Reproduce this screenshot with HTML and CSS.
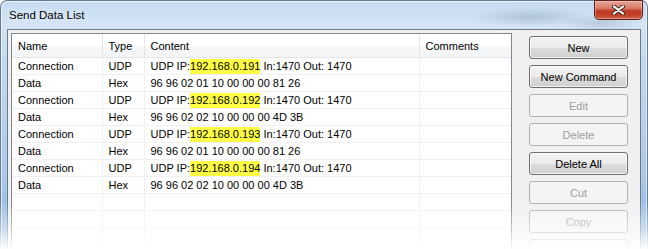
FILE: index.html
```html
<!DOCTYPE html>
<html>
<head>
  <title>Send Data List</title>
  <link rel="stylesheet" href="styles.css">
</head>
<body>
  <div class="window">
    <div class="titlebar">
      <span class="title">Send Data List</span>
      <button class="close" title="Close">
        <svg width="13" height="10" viewBox="0 0 13 10">
          <path d="M2 1.5 L11 8.5 M11 1.5 L2 8.5" stroke="#3a2a2a" stroke-width="4" stroke-linecap="round"/>
          <path d="M2 1.5 L11 8.5 M11 1.5 L2 8.5" stroke="#fff" stroke-width="2.2" stroke-linecap="round"/>
        </svg>
      </button>
    </div>

    <div class="client">
      <div class="list">
        <table>
          <colgroup>
            <col class="col-name">
            <col class="col-type">
            <col class="col-content">
            <col class="col-comments">
          </colgroup>
          <thead>
            <tr>
              <th>Name</th>
              <th>Type</th>
              <th>Content</th>
              <th>Comments</th>
            </tr>
          </thead>
          <tbody>
            <tr>
              <td>Connection</td>
              <td>UDP</td>
              <td>UDP IP:<span class="hl">192.168.0.191</span> In:1470 Out: 1470</td>
              <td></td>
            </tr>
            <tr>
              <td>Data</td>
              <td>Hex</td>
              <td>96 96 02 01 10 00 00 00 81 26</td>
              <td></td>
            </tr>
            <tr>
              <td>Connection</td>
              <td>UDP</td>
              <td>UDP IP:<span class="hl">192.168.0.192</span> In:1470 Out: 1470</td>
              <td></td>
            </tr>
            <tr>
              <td>Data</td>
              <td>Hex</td>
              <td>96 96 02 02 10 00 00 00 4D 3B</td>
              <td></td>
            </tr>
            <tr>
              <td>Connection</td>
              <td>UDP</td>
              <td>UDP IP:<span class="hl">192.168.0.193</span> In:1470 Out: 1470</td>
              <td></td>
            </tr>
            <tr>
              <td>Data</td>
              <td>Hex</td>
              <td>96 96 02 01 10 00 00 00 81 26</td>
              <td></td>
            </tr>
            <tr>
              <td>Connection</td>
              <td>UDP</td>
              <td>UDP IP:<span class="hl">192.168.0.194</span> In:1470 Out: 1470</td>
              <td></td>
            </tr>
            <tr>
              <td>Data</td>
              <td>Hex</td>
              <td>96 96 02 02 10 00 00 00 4D 3B</td>
              <td></td>
            </tr>
            <tr><td></td><td></td><td></td><td></td></tr>
            <tr><td></td><td></td><td></td><td></td></tr>
            <tr><td></td><td></td><td></td><td></td></tr>
            <tr><td></td><td></td><td></td><td></td></tr>
          </tbody>
        </table>
      </div>

      <div class="buttons">
        <button class="button">New</button>
        <button class="button">New Command</button>
        <button class="button" disabled>Edit</button>
        <button class="button" disabled>Delete</button>
        <button class="button">Delete All</button>
        <button class="button" disabled>Cut</button>
        <button class="button" disabled>Copy</button>
        <button class="button" disabled></button>
      </div>
    </div>
  </div>

  <div class="fade"></div>
</body>
</html>
```

FILE: styles.css
```css
/* page */
body {
  margin: 0;
  width: 648px;
  height: 249px;
  overflow: hidden;
  background-color: #fff;
  font-family: "Liberation Sans", Arial, sans-serif;
  font-size: 11px;
  position: relative;
}

/* window frame (aero glass) */
.window {
  position: relative;
  width: 648px;
  height: 270px;
  box-sizing: border-box;
  border: 1px solid #6a7b8e;
  border-bottom: none;
  border-radius: 7px 7px 0 0;
  padding: 0 6px;
  background:
    radial-gradient(ellipse 60px 10px at 530px 16px, rgba(120, 140, 160, 0.35), rgba(120, 140, 160, 0)),
    radial-gradient(ellipse 40px 8px at 600px 22px, rgba(120, 140, 160, 0.3), rgba(120, 140, 160, 0)),
    linear-gradient(to bottom, #c6dcf1 0, #d3e5f6 24px, #c2d9f1 60px, #a9c8ea 180px, #7eaee0 260px);
  box-shadow: inset 1px 1px 0 rgba(255, 255, 255, 0.6), inset -1px 0 0 rgba(255, 255, 255, 0.6);
}

.titlebar {
  height: 28px;
  display: flex;
  align-items: center;
}

.title {
  font-family: "Liberation Sans", Arial, sans-serif;
  font-size: 11.5px;
  color: #000;
  margin-left: 2px;
  text-shadow: 0 0 6px rgba(255, 255, 255, 0.9);
}

/* close button sits over the frame */
.close {
  position: absolute;
  top: -1px;
  right: 4px;
  width: 49px;
  height: 20px;
  padding: 0;
  border: 1px solid #5d2118;
  border-radius: 0 0 5px 5px;
  background: linear-gradient(to bottom, #e6a496 0, #d87c69 40%, #c13a24 55%, #c2412a 80%, #d4664e 100%);
  box-shadow: inset 0 0 0 1px rgba(255, 255, 255, 0.3);
  display: flex;
  align-items: center;
  justify-content: center;
}

/* client area */
.client {
  height: 240px;
  border: 1px solid #6d7a88;
  background-color: #f0f0f0;
  display: flex;
  align-items: flex-start;
  padding: 3px 12px 0 3px;
}

/* list view */
.list {
  width: 499px;
  height: 230px;
  border: 1px solid #828790;
  background-color: #fff;
  overflow: hidden;
}

table {
  border-collapse: collapse;
  table-layout: fixed;
  width: 499px;
}

.col-name { width: 90px; }
.col-type { width: 42px; }
.col-content { width: 275px; }
.col-comments { width: 92px; }

th {
  height: 23px;
  padding: 0 6px;
  text-align: left;
  font-weight: normal;
  color: #000;
  background: linear-gradient(to bottom, #fff 0, #fff 50%, #f7f8fa 51%, #f3f4f6 100%);
  border-right: 1px solid #e5e5e5;
  border-bottom: 1px solid #e5e5e5;
  white-space: nowrap;
}

td {
  height: 16px;
  padding: 0 6px;
  line-height: 16px;
  border-right: 1px solid #f0f0f0;
  border-bottom: 1px solid #f0f0f0;
  white-space: nowrap;
  overflow: hidden;
  color: #000;
  vertical-align: bottom;
}

th:last-child, td:last-child {
  border-right: none;
}

.hl {
  display: inline-block;
  background-color: #ffff45;
  line-height: 15px;
}

/* buttons column */
.buttons {
  margin-left: 17px;
  margin-top: 3px;
  display: flex;
  flex-direction: column;
  gap: 6px;
}

.button {
  width: 99px;
  height: 23px;
  padding: 0;
  font-family: "Liberation Sans", Arial, sans-serif;
  font-size: 11px;
  color: #000;
  border: 1px solid #707070;
  border-radius: 3px;
  background: linear-gradient(to bottom, #f2f2f2 0, #ebebeb 50%, #dddddd 51%, #cfcfcf 100%);
  box-shadow: inset 0 0 0 1px rgba(255, 255, 255, 0.7);
}

.button:disabled {
  color: #a0a0a0;
  border-color: #adb2b5;
  background: #f4f4f4;
  box-shadow: none;
}

/* bottom fade of the screenshot */
.fade {
  position: absolute;
  left: 0;
  right: 0;
  bottom: 0;
  height: 48px;
  background: linear-gradient(to bottom, rgba(255, 255, 255, 0) 0, rgba(255, 255, 255, 0.55) 60%, rgba(255, 255, 255, 0.97) 100%);
}
```
